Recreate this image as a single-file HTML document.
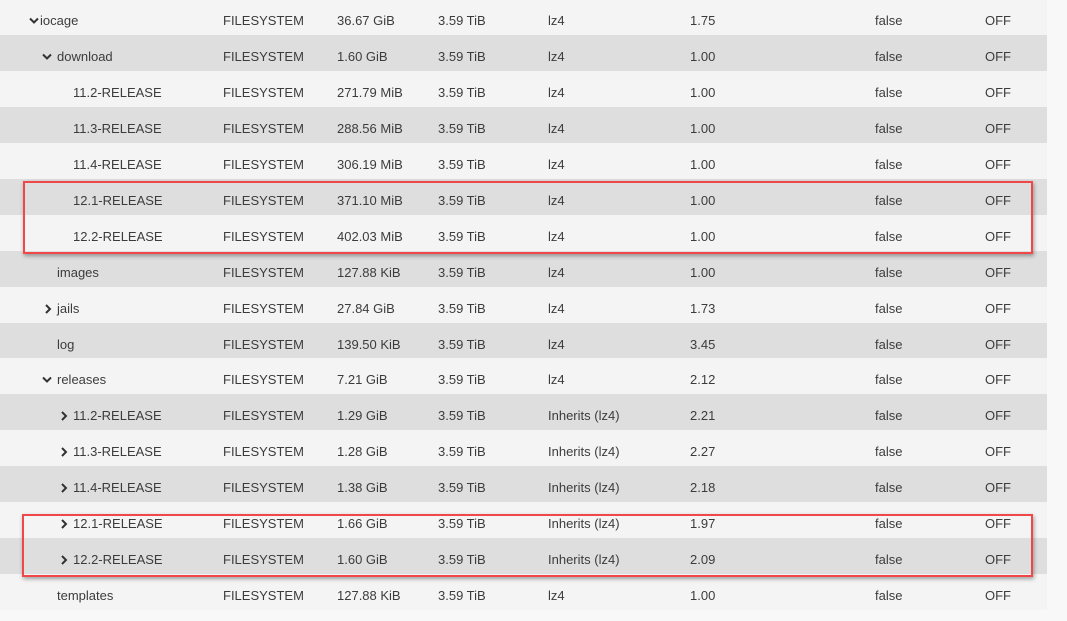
<!DOCTYPE html>
<html><head><style>
body{margin:0;width:1067px;height:621px;background:#f8f8f8;overflow:hidden;font-family:"Liberation Sans",sans-serif;font-size:13px;color:#3c3c3c;position:relative}
.r{position:absolute;left:0;width:1047px;height:36px;line-height:36px}
.r.o{background:#f4f4f4}.r.e{background:#dedede}
.r span{position:absolute;top:4px;white-space:nowrap}
.box{position:absolute;border:2.5px solid #f04848;box-shadow:1px 2px 4px rgba(0,0,0,.35);}
</style></head><body>
<div id="t"></div>
<div class="box" style="left:23px;top:181px;width:1006px;height:69px"></div>
<div class="box" style="left:22px;top:514px;width:1007px;height:59px"></div>
<script>
var rows=[
[29,40,"v","iocage","36.67 GiB","lz4","1.75"],
[42,57,"v","download","1.60 GiB","lz4","1.00"],
[0,73,"","11.2-RELEASE","271.79 MiB","lz4","1.00"],
[0,73,"","11.3-RELEASE","288.56 MiB","lz4","1.00"],
[0,73,"","11.4-RELEASE","306.19 MiB","lz4","1.00"],
[0,73,"","12.1-RELEASE","371.10 MiB","lz4","1.00"],
[0,73,"","12.2-RELEASE","402.03 MiB","lz4","1.00"],
[0,57,"","images","127.88 KiB","lz4","1.00"],
[44,57,">","jails","27.84 GiB","lz4","1.73"],
[0,57,"","log","139.50 KiB","lz4","3.45"],
[42,57,"v","releases","7.21 GiB","lz4","2.12"],
[60,73,">","11.2-RELEASE","1.29 GiB","Inherits (lz4)","2.21"],
[60,73,">","11.3-RELEASE","1.28 GiB","Inherits (lz4)","2.27"],
[60,73,">","11.4-RELEASE","1.38 GiB","Inherits (lz4)","2.18"],
[60,73,">","12.1-RELEASE","1.66 GiB","Inherits (lz4)","1.97"],
[60,73,">","12.2-RELEASE","1.60 GiB","Inherits (lz4)","2.09"],
[0,57,"","templates","127.88 KiB","lz4","1.00"]];
var h="";
rows.forEach(function(r,i){
var top=(-1+i*35.94).toFixed(1);
var ic="";
if(r[2]=="v")ic='<svg style="position:absolute;left:'+r[0]+'px;top:18px" width="10" height="8"><path d="M1 1.5L5 5.5L9 1.5" stroke="#333" stroke-width="2" fill="none"/></svg>';
if(r[2]==">")ic='<svg style="position:absolute;left:'+r[0]+'px;top:17px" width="8" height="10"><path d="M2 1L6 5L2 9" stroke="#333" stroke-width="2" fill="none"/></svg>';
h+='<div class="r '+(i%2?'e':'o')+'" style="top:'+top+'px">'+ic+
'<span style="left:'+r[1]+'px">'+r[3]+'</span><span style="left:223px">FILESYSTEM</span><span style="left:337px">'+r[4]+'</span><span style="left:438px">3.59 TiB</span><span style="left:548px">'+r[5]+'</span><span style="left:690px">'+r[6]+'</span><span style="left:875px">false</span><span style="left:985px">OFF</span></div>';
});
document.getElementById("t").innerHTML=h;
</script>
</body></html>
